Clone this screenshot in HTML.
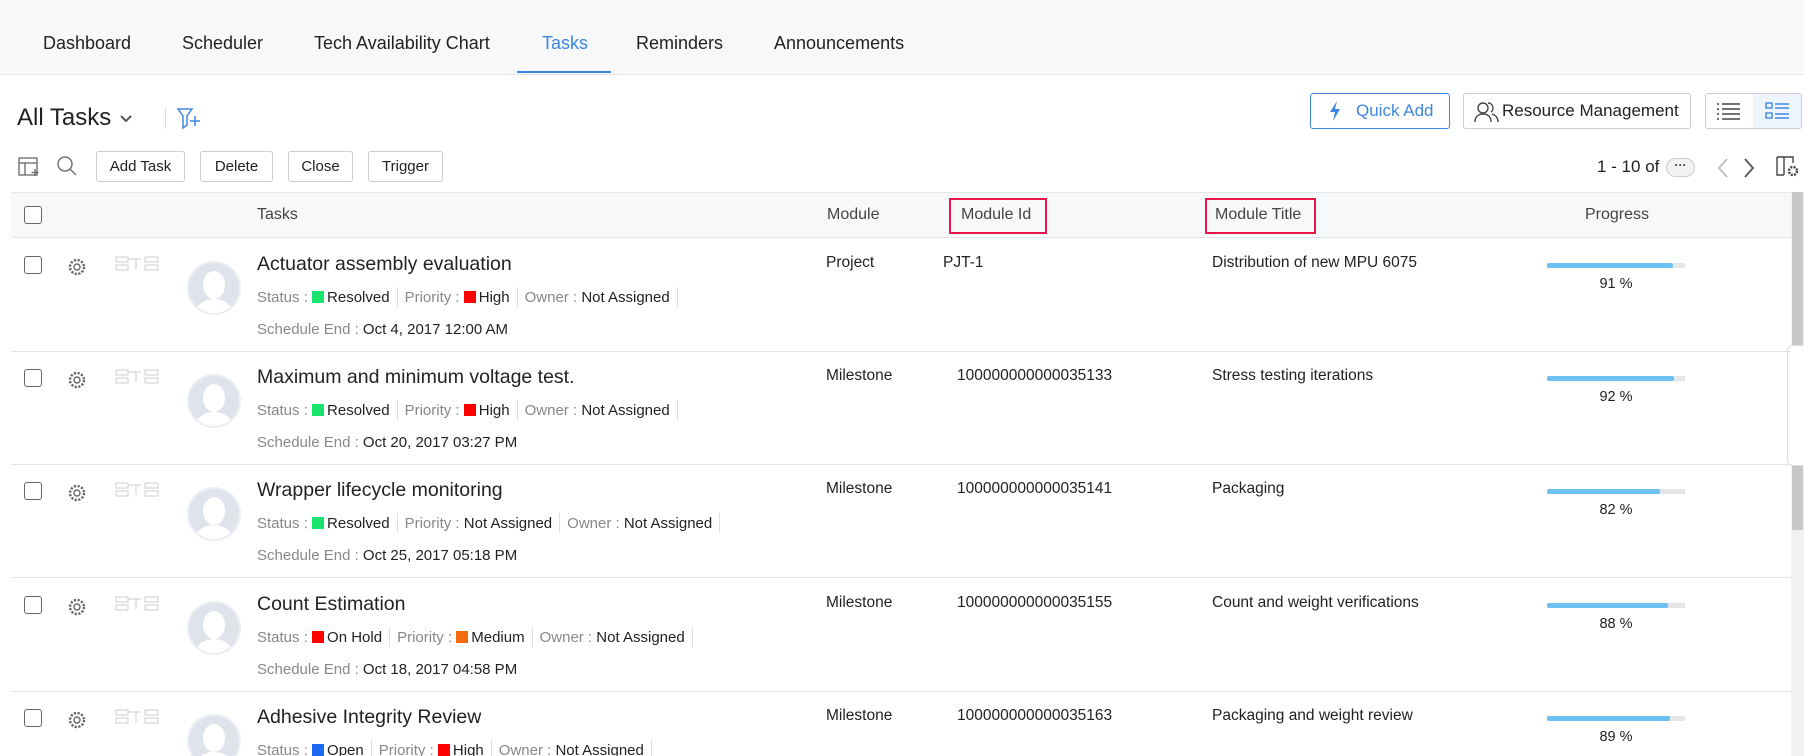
<!DOCTYPE html>
<html style="width:1804px;height:756px;overflow:hidden"><head><meta charset="utf-8"><style>
*{box-sizing:border-box;margin:0;padding:0}
body{width:1804px;height:756px;overflow:hidden;background:#fff;font-family:"Liberation Sans",sans-serif;color:#333;position:relative}
.a{position:absolute;white-space:nowrap}
.nav{position:absolute;left:0;top:0;width:1804px;height:75px;background:#f7f8fa;border-bottom:1px solid #e4e6ea}
.nav span{position:absolute;top:33px;font-size:18px;color:#222}
.btn{position:absolute;top:151px;height:31px;border:1px solid #ccc;border-radius:3px;font-size:15px;line-height:29px;text-align:center;color:#222;background:#fff}
.hdr{position:absolute;left:11px;top:192px;width:1780px;height:46px;background:#f7f8fa;border-top:1px solid #e4e6ea;border-bottom:1px solid #e4e6ea}
.hdr span{position:absolute;top:13px;font-size:16px;color:#444}
.cb{position:absolute;width:18px;height:18px;border:1.5px solid #666;border-radius:3px;background:#fff}
.row{position:absolute;left:11px;width:1780px;height:114px;border-bottom:1px solid #e2e4e8}
.row .t{position:absolute;left:246px;top:15px;font-size:19.5px;color:#222}
.row .m{position:absolute;left:246px;top:49px;font-size:15px;color:#888}
.row .m b{font-weight:normal;color:#222}
.row .m i{display:inline-block;width:12px;height:12px;vertical-align:-1px;margin-right:3px}
.row .m .sep{display:inline-block;width:1px;height:20px;background:#ddd;vertical-align:-5px;margin:0 7px}
.row .s{position:absolute;left:246px;top:83px;font-size:15px;color:#888}
.row .s b{font-weight:normal;color:#222}
.row .c{position:absolute;top:16px;font-size:15.5px;color:#222}
.bar{position:absolute;left:1536px;top:25px;width:138px;height:5px;background:#e6e6e6}
.bar div{height:5px;background:#6cc0f2;border-radius:2px}
.pct{position:absolute;left:1536px;width:138px;text-align:center;top:38px;font-size:14.5px;color:#222}
.av{position:absolute;left:176px;top:23px;width:54px;height:54px;border-radius:50%;background:#dfe3ec;border:2px solid #eceef3;overflow:hidden}
.av:before{content:"";position:absolute;left:14px;top:8px;width:22px;height:28px;border-radius:50%;background:#fff}
.av:after{content:"";position:absolute;left:6px;top:36px;width:38px;height:30px;border-radius:50% 50% 0 0;background:#fff}
</style></head><body>
<div class="nav">
<span style="left:43px">Dashboard</span>
<span style="left:182px">Scheduler</span>
<span style="left:314px">Tech Availability Chart</span>
<span style="left:542px;color:#3d87e0">Tasks</span>
<span style="left:636px">Reminders</span>
<span style="left:774px">Announcements</span>
<div style="position:absolute;left:517px;top:71px;width:94px;height:2px;background:#3d87e0"></div>
</div>

<div class="a" style="left:17px;top:104px;font-size:24px;color:#222">All Tasks</div>
<svg class="a" style="left:118px;top:113px" width="16" height="12"><path d="M3 3l5 5 5-5" stroke="#555" stroke-width="2" fill="none"/></svg>
<div class="a" style="left:165px;top:107px;width:1px;height:22px;background:#ddd"></div>
<svg class="a" style="left:176px;top:106px" width="26" height="24"><path d="M2 3h14l-5 7v9l-4 3v-12z" stroke="#3d87e0" stroke-width="1.5" fill="none"/><path d="M19 10v10M14 15h10" stroke="#3d87e0" stroke-width="1.5"/></svg>

<div class="a" style="left:1310px;top:93px;width:140px;height:36px;border:1px solid #3d87e0;border-radius:3px;color:#3d87e0;font-size:17px;line-height:34px;padding-left:45px">Quick Add</div>
<svg class="a" style="left:1327px;top:100px" width="16" height="22"><path d="M10 1L3 12h5l-2 9 7-12H8z" fill="#3d87e0"/></svg>
<div class="a" style="left:1463px;top:93px;width:228px;height:36px;border:1px solid #ccc;border-radius:3px;font-size:17px;line-height:34px;padding-left:38px;color:#222">Resource Management</div>
<svg class="a" style="left:1474px;top:100px" width="26" height="24"><circle cx="9" cy="8" r="5" stroke="#444" stroke-width="1.4" fill="none"/><path d="M1 22c0-6 4-8 8-8s8 2 8 8" stroke="#444" stroke-width="1.4" fill="none"/><path d="M14 3a5 5 0 0 1 3 9M18 14c3 1 6 3 6 8" stroke="#444" stroke-width="1.4" fill="none"/></svg>
<div class="a" style="left:1705px;top:93px;width:97px;height:36px;border:1px solid #ccc;border-radius:3px;overflow:hidden"><div style="position:absolute;left:47px;top:0;width:50px;height:34px;background:#eef5fd"></div></div>
<svg class="a" style="left:1716px;top:102px" width="26" height="18"><path d="M1 2h2M6 2h18M1 7h2M6 7h18M1 12h2M6 12h18M1 17h2M6 17h18" stroke="#444" stroke-width="1.5"/></svg>
<svg class="a" style="left:1765px;top:101px" width="26" height="20"><rect x="1" y="2" width="6" height="5" stroke="#3d87e0" fill="none" stroke-width="1.4"/><rect x="1" y="12" width="6" height="5" stroke="#3d87e0" fill="none" stroke-width="1.4"/><path d="M10 3h14M10 7h14M10 13h14M10 17h14" stroke="#3d87e0" stroke-width="1.4"/></svg>

<svg class="a" style="left:18px;top:157px" width="24" height="20"><rect x="1" y="1" width="18" height="17" stroke="#666" fill="none" stroke-width="1.3"/><path d="M1 6h18M7 6v12" stroke="#666" stroke-width="1.3"/><path d="M17 12v7M13.5 15.5h7" stroke="#666" stroke-width="1.3"/></svg>
<svg class="a" style="left:56px;top:155px" width="22" height="22"><circle cx="9" cy="9" r="7" stroke="#777" stroke-width="1.5" fill="none"/><path d="M14 14l6 6" stroke="#777" stroke-width="1.5"/></svg>
<div class="btn" style="left:96px;width:89px">Add Task</div>
<div class="btn" style="left:200px;width:73px">Delete</div>
<div class="btn" style="left:288px;width:65px">Close</div>
<div class="btn" style="left:368px;width:75px">Trigger</div>

<div class="a" style="left:1597px;top:157px;font-size:17px;color:#222">1 - 10 of</div>
<div class="a" style="left:1666px;top:158px;width:29px;height:19px;border:1px solid #ccc;border-radius:10px;background:#f2f2f2;font-size:12px;line-height:13px;text-align:center;font-weight:bold">···</div>
<svg class="a" style="left:1716px;top:157px" width="14" height="22"><path d="M11 2l-8 9 8 9" stroke="#bbb" stroke-width="1.8" fill="none"/></svg>
<svg class="a" style="left:1742px;top:157px" width="14" height="22"><path d="M3 2l8 9-8 9" stroke="#555" stroke-width="1.8" fill="none"/></svg>
<svg class="a" style="left:1776px;top:156px" width="24" height="22"><path d="M1 1h16v6M1 1v18h7M8 1v18" stroke="#444" stroke-width="1.4" fill="none"/><circle cx="17" cy="15" r="4" stroke="#444" stroke-width="2.5" fill="none" stroke-dasharray="2 1.2"/></svg>

<div class="hdr">
<div class="cb" style="left:13px;top:13px"></div>
<span style="left:246px">Tasks</span>
<span style="left:816px">Module</span>
<span style="left:950px">Module Id</span>
<span style="left:1204px">Module Title</span>
<span style="left:1574px">Progress</span>
</div>
<div class="a" style="left:949px;top:198px;width:98px;height:36px;border:2.5px solid #e8174a"></div>
<div class="a" style="left:1205px;top:198px;width:111px;height:36px;border:2.5px solid #e8174a"></div>

<div class="a" style="left:1791px;top:192px;width:13px;height:564px;background:#f1f1f1"></div>
<div class="a" style="left:1792px;top:192px;width:11px;height:338px;background:#c8c8c8"></div>
<div class="a" style="left:1787px;top:345px;width:17px;height:121px;background:#fff;border:1px solid #ddd;border-right:none;border-radius:6px 0 0 6px"></div>

<div class="row" style="top:238px">
<div class="cb" style="left:13px;top:18px"></div>
<svg class="a" style="left:56px;top:19px" width="20" height="20"><circle cx="10" cy="10" r="3" stroke="#666" stroke-width="1.4" fill="none"/><circle cx="10" cy="10" r="7" stroke="#666" stroke-width="2.4" fill="none" stroke-dasharray="2.2 1.5"/></svg>
<svg class="a" style="left:104px;top:17px" width="46" height="18"><rect x="1" y="2" width="12" height="5" stroke="#ccc" fill="none"/><rect x="1" y="10" width="12" height="5" stroke="#ccc" fill="none"/><path d="M13 4h8v10M21 4h5" stroke="#ccc" fill="none"/><rect x="30" y="2" width="13" height="5" stroke="#ccc" fill="none"/><rect x="30" y="10" width="13" height="5" stroke="#ccc" fill="none"/></svg>
<div class="av"></div>
<div class="t">Actuator assembly evaluation</div>
<div class="m">Status : <i style="background:#19e36a"></i><b>Resolved</b><span class="sep"></span>Priority : <i style="background:#f00"></i><b>High</b><span class="sep"></span>Owner : <b>Not Assigned</b><span class="sep"></span></div>
<div class="s">Schedule End : <b>Oct 4, 2017 12:00 AM</b></div>
<div class="c" style="left:815px">Project</div><div class="c" style="left:932px">PJT-1</div><div class="c" style="left:1201px">Distribution of new MPU 6075</div>
<div class="bar"><div style="width:91%"></div></div><div class="pct">91 %</div>
</div>

<div class="row" style="top:351px">
<div class="cb" style="left:13px;top:18px"></div>
<svg class="a" style="left:56px;top:19px" width="20" height="20"><circle cx="10" cy="10" r="3" stroke="#666" stroke-width="1.4" fill="none"/><circle cx="10" cy="10" r="7" stroke="#666" stroke-width="2.4" fill="none" stroke-dasharray="2.2 1.5"/></svg>
<svg class="a" style="left:104px;top:17px" width="46" height="18"><rect x="1" y="2" width="12" height="5" stroke="#ccc" fill="none"/><rect x="1" y="10" width="12" height="5" stroke="#ccc" fill="none"/><path d="M13 4h8v10M21 4h5" stroke="#ccc" fill="none"/><rect x="30" y="2" width="13" height="5" stroke="#ccc" fill="none"/><rect x="30" y="10" width="13" height="5" stroke="#ccc" fill="none"/></svg>
<div class="av"></div>
<div class="t">Maximum and minimum voltage test.</div>
<div class="m">Status : <i style="background:#19e36a"></i><b>Resolved</b><span class="sep"></span>Priority : <i style="background:#f00"></i><b>High</b><span class="sep"></span>Owner : <b>Not Assigned</b><span class="sep"></span></div>
<div class="s">Schedule End : <b>Oct 20, 2017 03:27 PM</b></div>
<div class="c" style="left:815px">Milestone</div><div class="c" style="left:946px">100000000000035133</div><div class="c" style="left:1201px">Stress testing iterations</div>
<div class="bar"><div style="width:92%"></div></div><div class="pct">92 %</div>
</div>

<div class="row" style="top:464px">
<div class="cb" style="left:13px;top:18px"></div>
<svg class="a" style="left:56px;top:19px" width="20" height="20"><circle cx="10" cy="10" r="3" stroke="#666" stroke-width="1.4" fill="none"/><circle cx="10" cy="10" r="7" stroke="#666" stroke-width="2.4" fill="none" stroke-dasharray="2.2 1.5"/></svg>
<svg class="a" style="left:104px;top:17px" width="46" height="18"><rect x="1" y="2" width="12" height="5" stroke="#ccc" fill="none"/><rect x="1" y="10" width="12" height="5" stroke="#ccc" fill="none"/><path d="M13 4h8v10M21 4h5" stroke="#ccc" fill="none"/><rect x="30" y="2" width="13" height="5" stroke="#ccc" fill="none"/><rect x="30" y="10" width="13" height="5" stroke="#ccc" fill="none"/></svg>
<div class="av"></div>
<div class="t">Wrapper lifecycle monitoring</div>
<div class="m">Status : <i style="background:#19e36a"></i><b>Resolved</b><span class="sep"></span>Priority : <b>Not Assigned</b><span class="sep"></span>Owner : <b>Not Assigned</b><span class="sep"></span></div>
<div class="s">Schedule End : <b>Oct 25, 2017 05:18 PM</b></div>
<div class="c" style="left:815px">Milestone</div><div class="c" style="left:946px">100000000000035141</div><div class="c" style="left:1201px">Packaging</div>
<div class="bar"><div style="width:82%"></div></div><div class="pct">82 %</div>
</div>

<div class="row" style="top:578px">
<div class="cb" style="left:13px;top:18px"></div>
<svg class="a" style="left:56px;top:19px" width="20" height="20"><circle cx="10" cy="10" r="3" stroke="#666" stroke-width="1.4" fill="none"/><circle cx="10" cy="10" r="7" stroke="#666" stroke-width="2.4" fill="none" stroke-dasharray="2.2 1.5"/></svg>
<svg class="a" style="left:104px;top:17px" width="46" height="18"><rect x="1" y="2" width="12" height="5" stroke="#ccc" fill="none"/><rect x="1" y="10" width="12" height="5" stroke="#ccc" fill="none"/><path d="M13 4h8v10M21 4h5" stroke="#ccc" fill="none"/><rect x="30" y="2" width="13" height="5" stroke="#ccc" fill="none"/><rect x="30" y="10" width="13" height="5" stroke="#ccc" fill="none"/></svg>
<div class="av"></div>
<div class="t">Count Estimation</div>
<div class="m">Status : <i style="background:#f00"></i><b>On Hold</b><span class="sep"></span>Priority : <i style="background:#f26b0f"></i><b>Medium</b><span class="sep"></span>Owner : <b>Not Assigned</b><span class="sep"></span></div>
<div class="s">Schedule End : <b>Oct 18, 2017 04:58 PM</b></div>
<div class="c" style="left:815px">Milestone</div><div class="c" style="left:946px">100000000000035155</div><div class="c" style="left:1201px">Count and weight verifications</div>
<div class="bar"><div style="width:88%"></div></div><div class="pct">88 %</div>
</div>

<div class="row" style="top:691px;height:65px;border-bottom:none;overflow:hidden">
<div class="cb" style="left:13px;top:18px"></div>
<svg class="a" style="left:56px;top:19px" width="20" height="20"><circle cx="10" cy="10" r="3" stroke="#666" stroke-width="1.4" fill="none"/><circle cx="10" cy="10" r="7" stroke="#666" stroke-width="2.4" fill="none" stroke-dasharray="2.2 1.5"/></svg>
<svg class="a" style="left:104px;top:17px" width="46" height="18"><rect x="1" y="2" width="12" height="5" stroke="#ccc" fill="none"/><rect x="1" y="10" width="12" height="5" stroke="#ccc" fill="none"/><path d="M13 4h8v10M21 4h5" stroke="#ccc" fill="none"/><rect x="30" y="2" width="13" height="5" stroke="#ccc" fill="none"/><rect x="30" y="10" width="13" height="5" stroke="#ccc" fill="none"/></svg>
<div class="av"></div>
<div class="t">Adhesive Integrity Review</div>
<div class="m">Status : <i style="background:#1a6bf0"></i><b>Open</b><span class="sep"></span>Priority : <i style="background:#f00"></i><b>High</b><span class="sep"></span>Owner : <b>Not Assigned</b><span class="sep"></span></div>
<div class="c" style="left:815px">Milestone</div><div class="c" style="left:946px">100000000000035163</div><div class="c" style="left:1201px">Packaging and weight review</div>
<div class="bar"><div style="width:89%"></div></div><div class="pct">89 %</div>
</div>
</body></html>
